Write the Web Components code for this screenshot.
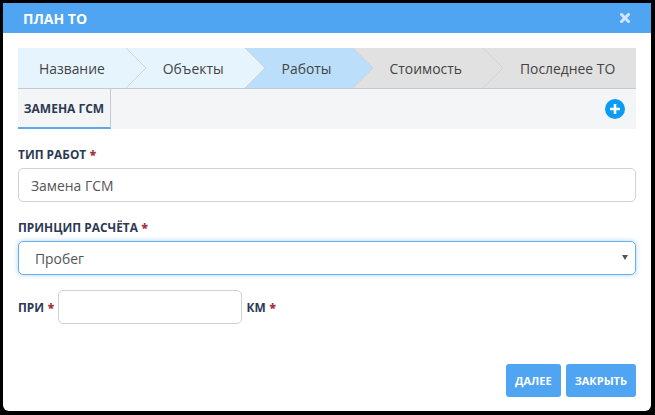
<!DOCTYPE html>
<html lang="ru"><head><meta charset="utf-8"><title>План ТО</title>
<style>
html,body{margin:0;height:100%;background:#000;overflow:hidden}
body{font-family:"Open Sans","Noto Sans",sans-serif;padding:3px 4px 4px 3px;box-sizing:border-box;width:655px;height:415px}
</style></head><body>
<plan-dialog heading="ПЛАН ТО">
  <step-bar>
    <wiz-step state="done" first>Название</wiz-step>
    <wiz-step state="done">Объекты</wiz-step>
    <wiz-step state="active">Работы</wiz-step>
    <wiz-step state="todo">Стоимость</wiz-step>
    <wiz-step state="todo" last>Последнее ТО</wiz-step>
  </step-bar>
  <tab-strip label="ЗАМЕНА ГСМ"></tab-strip>
  <form-field label="ТИП РАБОТ" style="margin-top:17px"><text-box>Замена ГСМ</text-box></form-field>
  <form-field label="ПРИНЦИП РАСЧЁТА" style="margin-top:17px"><text-box focus select>Пробег</text-box></form-field>
  <inline-field></inline-field>
  <dialog-actions slot="footer"><action-button>ДАЛЕЕ</action-button><action-button>ЗАКРЫТЬ</action-button></dialog-actions>
</plan-dialog>
<script>
function def(name, html, extra){
  const t=document.createElement('template');t.innerHTML=html;
  customElements.define(name,class extends HTMLElement{
    constructor(){super();this.attachShadow({mode:'open'}).appendChild(t.content.cloneNode(true));}
    connectedCallback(){extra&&extra(this,this.shadowRoot)}
  });
}
def('plan-dialog',`<style>
:host{display:flex;flex-direction:column;height:100%;background:#fff;border-radius:0 0 6px 6px;overflow:hidden}
header{height:30px;flex:none;background:#4fa5f2;color:#fff;display:flex;align-items:center;justify-content:space-between;padding:0 21px 0 20px;font-weight:700;font-size:14px}
svg{display:block}
main{flex:1;display:flex;flex-direction:column;padding:15px 15px 14px}
footer{margin-top:auto}
</style><header><span id="h"></span><svg width="10" height="10" viewBox="0 0 10 10"><path d="M1.5 1.5l7 7M8.5 1.5l-7 7" stroke="#d3e7fb" stroke-width="3" stroke-linecap="square" fill="none"/></svg></header>
<main><slot></slot><footer><slot name="footer"></slot></footer></main>`,(e,s)=>{s.getElementById('h').textContent=e.getAttribute('heading')});
def('step-bar',`<style>:host{display:flex;height:40px;border-bottom:1px solid #c3cad6;flex:none}</style><slot></slot>`);
def('wiz-step',`<style>
:host{display:flex;align-items:center;position:relative;height:40px;font-size:13.9px;color:#444;white-space:nowrap;padding:0 21px 0 37px;background:var(--c);flex:none;box-sizing:border-box}
:host([first]){padding-left:21px}
:host([last]){flex:1;padding-right:0}
:host([state=done]){--c:#e6f4fd}
:host([state=active]){--c:#bbdffa}
:host([state=todo]){--c:#e1e1e1}
svg{position:absolute;left:100%;top:0;z-index:1;overflow:visible}
:host([last]) svg{display:none}
</style><slot></slot><svg width="20" height="40" viewBox="0 0 20 40"><polygon points="0,0 20,20 0,40" fill="var(--c)"/><polyline points="0,0 20,20 0,40" fill="none" stroke="#d2d2d2" stroke-width="1"/></svg>`);
def('tab-strip',`<style>
:host{display:flex;align-items:stretch;justify-content:space-between;height:40px;background:#f4f5f7;flex:none}
.tab{width:93px;box-sizing:border-box;border-right:1px solid #c3cad6;border-bottom:2px solid #5aa9ee;display:flex;align-items:center;justify-content:center;font-size:12px;font-weight:700;color:#2c3a52;padding-top:1px}
svg{align-self:center;margin-right:11px;display:block}
</style><div class="tab" id="t"></div><svg width="20" height="20" viewBox="0 0 20 20"><circle cx="10" cy="10" r="10" fill="#0a9cf5"/><path d="M10 5v10M5 10h10" stroke="#fff" stroke-width="2.6"/></svg>`,(e,s)=>{s.getElementById('t').textContent=e.getAttribute('label')});
def('req-label',`<style>:host{display:inline-block;font-size:11.9px;font-weight:700;color:#2c3a52;line-height:16px;white-space:nowrap}b{color:#a5343f;margin-left:.5px}</style><slot></slot> <b>*</b>`);
def('form-field',`<style>:host{display:block;flex:none}req-label{display:block;margin-bottom:6px}</style><req-label id="l"></req-label><slot></slot>`,(e,s)=>{s.getElementById('l').textContent=e.getAttribute('label');});
def('text-box',`<style>
:host{display:flex;align-items:center;position:relative;height:34px;box-sizing:border-box;border:1px solid #cfd3d8;border-radius:5px;background:#fff;padding:0 12px;font-size:13.9px;color:#555}
:host([focus]){border-color:#66afe9;box-shadow:0 0 5px rgba(102,175,233,.55)}
:host([select]){padding-left:16px}
i{display:none;position:absolute;right:7px;top:13px;border:3px solid transparent;border-top:5px solid #555;border-bottom:0}
:host([select]) i{display:block}
</style><slot></slot><i></i>`);
def('inline-field',`<style>:host{display:flex;align-items:center;margin-top:15px;flex:none}text-box{width:184px;margin:0 5px 0 3.5px}</style>
<req-label>ПРИ</req-label><text-box></text-box><req-label>КМ</req-label>`);
def('dialog-actions',`<style>:host{display:flex;justify-content:flex-end;gap:5px}</style><slot></slot>`);
def('action-button',`<style>:host{display:flex;align-items:center;height:33px;padding:0 9px;border-radius:3px;background:#4fa5f2;color:#fff;font-size:11px;font-weight:700;box-sizing:border-box}</style><slot></slot>`);
</script></body></html>
